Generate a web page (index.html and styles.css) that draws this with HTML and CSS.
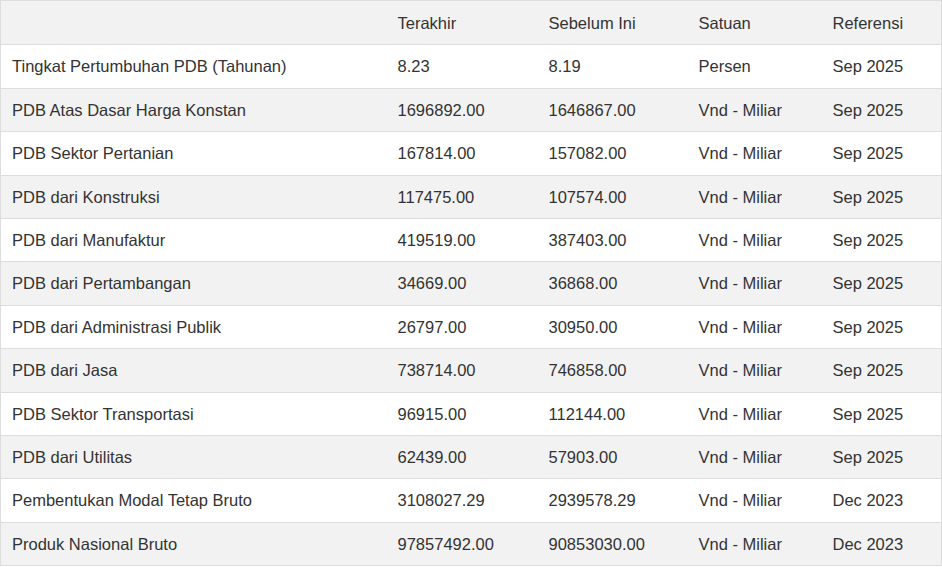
FILE: index.html
```html
<!DOCTYPE html>
<html lang="id">
<head>
<meta charset="utf-8">
<link rel="stylesheet" href="styles.css">
</head>
<body>
<table class="data">
  <colgroup>
    <col class="c-name"><col class="c-last"><col class="c-prev"><col class="c-unit"><col class="c-ref">
  </colgroup>
  <thead>
    <tr><th></th><th>Terakhir</th><th>Sebelum Ini</th><th>Satuan</th><th>Referensi</th></tr>
  </thead>
  <tbody>
    <tr><td>Tingkat Pertumbuhan PDB (Tahunan)</td><td>8.23</td><td>8.19</td><td>Persen</td><td>Sep 2025</td></tr>
    <tr><td>PDB Atas Dasar Harga Konstan</td><td>1696892.00</td><td>1646867.00</td><td>Vnd - Miliar</td><td>Sep 2025</td></tr>
    <tr><td>PDB Sektor Pertanian</td><td>167814.00</td><td>157082.00</td><td>Vnd - Miliar</td><td>Sep 2025</td></tr>
    <tr><td>PDB dari Konstruksi</td><td>117475.00</td><td>107574.00</td><td>Vnd - Miliar</td><td>Sep 2025</td></tr>
    <tr><td>PDB dari Manufaktur</td><td>419519.00</td><td>387403.00</td><td>Vnd - Miliar</td><td>Sep 2025</td></tr>
    <tr><td>PDB dari Pertambangan</td><td>34669.00</td><td>36868.00</td><td>Vnd - Miliar</td><td>Sep 2025</td></tr>
    <tr><td>PDB dari Administrasi Publik</td><td>26797.00</td><td>30950.00</td><td>Vnd - Miliar</td><td>Sep 2025</td></tr>
    <tr><td>PDB dari Jasa</td><td>738714.00</td><td>746858.00</td><td>Vnd - Miliar</td><td>Sep 2025</td></tr>
    <tr><td>PDB Sektor Transportasi</td><td>96915.00</td><td>112144.00</td><td>Vnd - Miliar</td><td>Sep 2025</td></tr>
    <tr><td>PDB dari Utilitas</td><td>62439.00</td><td>57903.00</td><td>Vnd - Miliar</td><td>Sep 2025</td></tr>
    <tr><td>Pembentukan Modal Tetap Bruto</td><td>3108027.29</td><td>2939578.29</td><td>Vnd - Miliar</td><td>Dec 2023</td></tr>
    <tr><td>Produk Nasional Bruto</td><td>97857492.00</td><td>90853030.00</td><td>Vnd - Miliar</td><td>Dec 2023</td></tr>
  </tbody>
</table>
</body>
</html>
```
FILE: styles.css
```css
html, body {
  margin: 0;
  padding: 0;
  background: #ffffff;
}
.data {
  width: 941px;
  border-collapse: collapse;
  table-layout: fixed;
  font-family: "Liberation Sans", Arial, sans-serif;
  font-size: 16.5px;
  line-height: 18.4px;
  color: #333333;
  border: 1px solid #dddddd;
}
.c-name { width: 386px; }
.c-last { width: 151px; }
.c-prev { width: 150px; }
.c-unit { width: 134px; }
.c-ref { width: 120px; }
.data th, .data td {
  text-align: left;
  font-weight: normal;
  padding: 12px 11px;
  border-top: 1px solid #dddddd;
  white-space: nowrap;
}
.data th {
  padding-top: 13px;
  padding-bottom: 12px;
}
.data thead tr {
  background: #f2f2f2;
}
.data tbody tr:nth-child(even) {
  background: #f2f2f2;
}
.data tbody tr:nth-child(odd) {
  background: #ffffff;
}
```
